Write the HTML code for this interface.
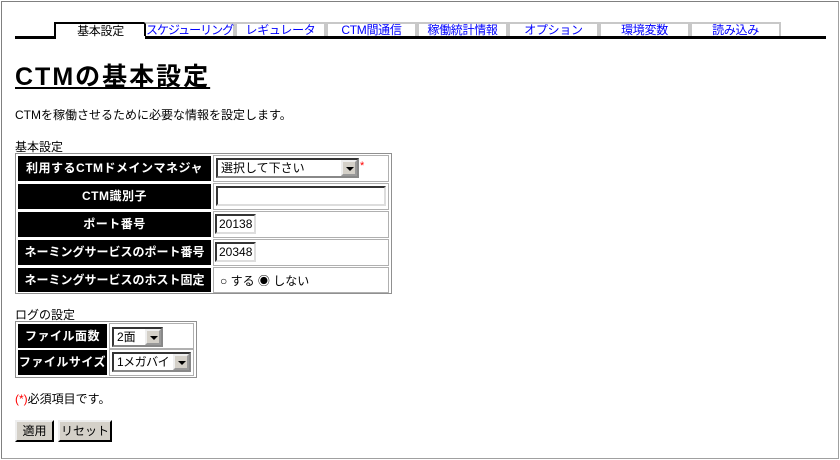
<!DOCTYPE html>
<html><head><meta charset="utf-8"><style>
*{margin:0;padding:0;box-sizing:border-box}
body{width:840px;height:460px;background:#fff;font-family:"Liberation Sans","Noto Sans CJK JP",sans-serif;font-size:12px;color:#000;position:relative;overflow:hidden}
.frame{position:absolute;left:1px;top:1px;width:838px;height:458px;border:1px solid #808080;border-right-color:#a0a0a0;border-bottom-color:#a0a0a0}
.a{position:absolute;white-space:nowrap}
.line{left:15px;top:36px;width:811px;height:3px;background:#000}
.tab{top:22px;height:14px;width:91px;border:2px solid #c8c8c8;border-bottom:none;text-align:center;color:#00f;font-size:12px;line-height:13px;white-space:nowrap;overflow:visible;letter-spacing:-0.3px}
.tab.on{border-color:#000;border-right:none;color:#000;height:17px;background:#fff}
h1{position:absolute;left:15px;top:57px;font-size:25px;font-weight:bold;text-decoration:underline;letter-spacing:2px}
.lab{background:#000;color:#fff;font-weight:bold;font-size:12px;text-align:center;line-height:24px;white-space:nowrap;letter-spacing:0.5px}
.box{border:1px solid #b0b0b0}
.outer{border:1px solid #909090}
.inp{background:#fff;border:2px inset #888;border-right-color:#ddd;border-bottom-color:#ddd;font-size:12px;padding-left:2px;line-height:16px;height:20px}
.sel{background:#fff;border:2px inset #888;height:20px;font-size:12px;padding-left:3px;line-height:16px;overflow:hidden}
.arr{position:absolute;right:0;top:0;width:16px;height:16px;background:#d4d0c8;border:2px outset #eee}
.arr:after{content:"";position:absolute;left:3px;top:5px;border:4px solid transparent;border-top:4px solid #000}
.btn{background:#d4d0c8;border:2px outset #eee;border-right-color:#404040;border-bottom-color:#404040;font-size:12px;text-align:center;line-height:18px;height:22px;white-space:nowrap}
</style></head><body>
<div class="frame"></div>
<div class="a line"></div>
<div class="a tab on" style="left:54px;line-height:14px">基本設定</div>
<div class="a tab" style="left:144px;border-left-color:#000;letter-spacing:-1px">スケジューリング</div>
<div class="a tab" style="left:235px">レギュレータ</div>
<div class="a tab" style="left:326px">CTM間通信</div>
<div class="a tab" style="left:417px">稼働統計情報</div>
<div class="a tab" style="left:508px">オプション</div>
<div class="a tab" style="left:599px">環境変数</div>
<div class="a tab" style="left:690px">読み込み</div>
<h1>CTMの基本設定</h1>
<div class="a" style="left:15px;top:106px">CTMを稼働させるために必要な情報を設定します。</div>
<div class="a" style="left:15px;top:138px">基本設定</div>
<div class="a outer" style="left:15px;top:153px;width:377px;height:141px"></div>
<div class="a lab" style="left:18px;top:156px;width:193px;height:25px">利用するCTMドメインマネジャ</div>
<div class="a lab" style="left:18px;top:184px;width:193px;height:25px">CTM識別子</div>
<div class="a lab" style="left:18px;top:212px;width:193px;height:25px">ポート番号</div>
<div class="a lab" style="left:18px;top:240px;width:193px;height:25px;letter-spacing:0">ネーミングサービスのポート番号</div>
<div class="a lab" style="left:18px;top:268px;width:193px;height:24px;letter-spacing:0">ネーミングサービスのホスト固定</div>
<div class="a box" style="left:213px;top:155px;width:176px;height:27px"></div>
<div class="a box" style="left:213px;top:183px;width:176px;height:27px"></div>
<div class="a box" style="left:213px;top:211px;width:176px;height:27px"></div>
<div class="a box" style="left:213px;top:239px;width:176px;height:27px"></div>
<div class="a box" style="left:213px;top:267px;width:176px;height:26px"></div>
<div class="a sel" style="left:216px;top:158px;width:143px">選択して下さい<span class="arr"></span></div>
<div class="a" style="left:360px;top:160px;color:#f00;font-size:11px">*</div>
<div class="a inp" style="left:216px;top:186px;width:170px"></div>
<div class="a inp" style="left:215px;top:214px;width:41px">20138</div>
<div class="a inp" style="left:215px;top:242px;width:41px">20348</div>
<div class="a" style="left:220px;top:272px">○ する ◉ しない</div>
<div class="a" style="left:15px;top:306px">ログの設定</div>
<div class="a outer" style="left:15px;top:321px;width:182px;height:57px"></div>
<div class="a lab" style="left:18px;top:324px;width:89px;height:24px">ファイル面数</div>
<div class="a lab" style="left:18px;top:350px;width:89px;height:25px">ファイルサイズ</div>
<div class="a box" style="left:109px;top:323px;width:85px;height:26px"></div>
<div class="a box" style="left:109px;top:349px;width:85px;height:27px"></div>
<div class="a sel" style="left:112px;top:327px;width:51px">2面<span class="arr"></span></div>
<div class="a sel" style="left:112px;top:352px;width:79px;letter-spacing:-0.5px">1メガバイト<span class="arr"></span></div>
<div class="a" style="left:15px;top:390px"><span style="color:#f00">(*)</span>必須項目です。</div>
<div class="a btn" style="left:15px;top:420px;width:39px">適用</div>
<div class="a btn" style="left:58px;top:420px;width:54px">リセット</div>
</body></html>
